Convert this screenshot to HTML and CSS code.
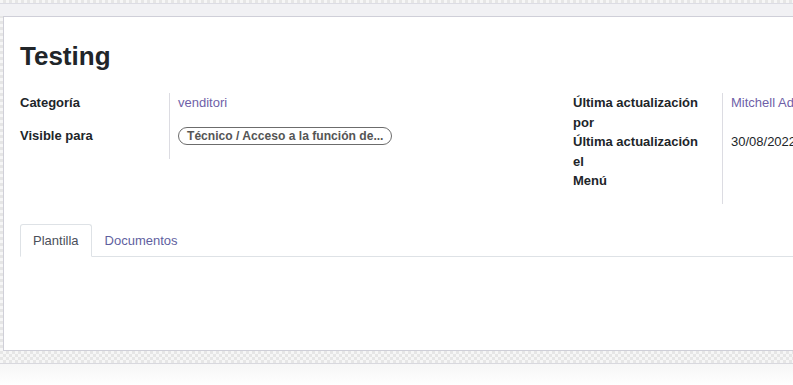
FILE: index.html
```html
<!DOCTYPE html>
<html lang="es">

<head>
    <meta charset="UTF-8">
    <meta name="viewport" content="width=device-width, initial-scale=1.0">
    <title>Testing</title>
    <link rel="stylesheet" href="styles.css">
</head>
<body>
    <div class="topbar"></div>
    <div class="sheet">
        <h1 class="title">Testing</h1>

        <div class="groups">
            <div class="group group-left">
                <div class="row">
                    <div class="label">Categoría</div>
                    <div class="value"><a href="#">venditori</a></div>
                </div>
                <div class="row">
                    <div class="label">Visible para</div>
                    <div class="value"><span class="tag">Técnico / Acceso a la función de...</span></div>
                </div>
            </div>
            <div class="group group-right">
                <div class="row">
                    <div class="label">Última actualización por</div>
                    <div class="value"><a href="#">Mitchell Admin</a></div>
                </div>
                <div class="row">
                    <div class="label">Última actualización el</div>
                    <div class="value">30/08/2022 10:21:45</div>
                </div>
                <div class="row">
                    <div class="label">Menú</div>
                    <div class="value"></div>
                </div>
            </div>
        </div>

        <nav class="tabs">
            <a href="#" class="tab current">Plantilla</a>
            <a href="#" class="tab">Documentos</a>
        </nav>
        <div class="tab-body"></div>
    </div>
    <div class="bottom"></div>
</body>
</html>
```

FILE: styles.css
```css
html, body {
    margin: 0;
    overflow: hidden;
}

body {
    width: 793px;
    height: 385px;
    font-family: "Liberation Sans", Arial, sans-serif;
    font-size: 13px;
    line-height: 19.5px;
    color: #212529;
    background-color: #f2f2f2;
    background-image: conic-gradient(#e6e6e6 25%, #f6f6f6 0 50%, #e6e6e6 0 75%, #f6f6f6 0);
    background-size: 6px 6px;
}

.topbar {
    height: 12px;
    margin-top: 3px;
    border-top: 1px solid #dcdce4;
    background: #f1f1f4;
}

.sheet {
    width: 1100px;
    height: 333px;
    margin-left: 3px;
    padding: 0 16px;
    background: #fff;
    border: 1px solid #cfcfd8;
    border-right: none;
}

.title {
    margin: 24px 0 21px;
    font-size: 26px;
    line-height: 31px;
    font-weight: bold;
}

.groups {
    display: flex;
}

.group-left {
    width: 553px;
}

.row {
    display: flex;
    min-height: 33px;
}

.label {
    width: 149px;
    padding-right: 8px;
    box-sizing: border-box;
    font-weight: bold;
}

.group-right .label {
    width: 149px;
    padding-right: 20px;
}

.value {
    flex: 1;
    padding-left: 8px;
    border-left: 1px solid #dcdce2;
    white-space: nowrap;
}

.value a {
    color: #6f5fa8;
    text-decoration: none;
}

.tag {
    display: inline-block;
    padding: 0 8px;
    border: 1px solid #6c6c6c;
    border-radius: 10px;
    line-height: 16px;
    font-size: 12.1px;
    font-weight: bold;
    color: #555;
}

.tabs {
    display: flex;
    margin-top: 20px;
    border-bottom: 1px solid #dee2e6;
}

.tab {
    padding: 6px 12px;
    line-height: 19px;
    margin-bottom: -1px;
    border: 1px solid transparent;
    border-radius: 3px 3px 0 0;
    color: #5f5fa0;
    text-decoration: none;
}

.tab.current {
    color: #4b4f5a;
    background: #fff;
    border-color: #dee2e6 #dee2e6 #fff;
}

.bottom {
    height: 22px;
    margin-top: 12px;
    border-top: 1px solid #d8d8de;
    background: linear-gradient(#f6f6f6, #fff);
}
```
